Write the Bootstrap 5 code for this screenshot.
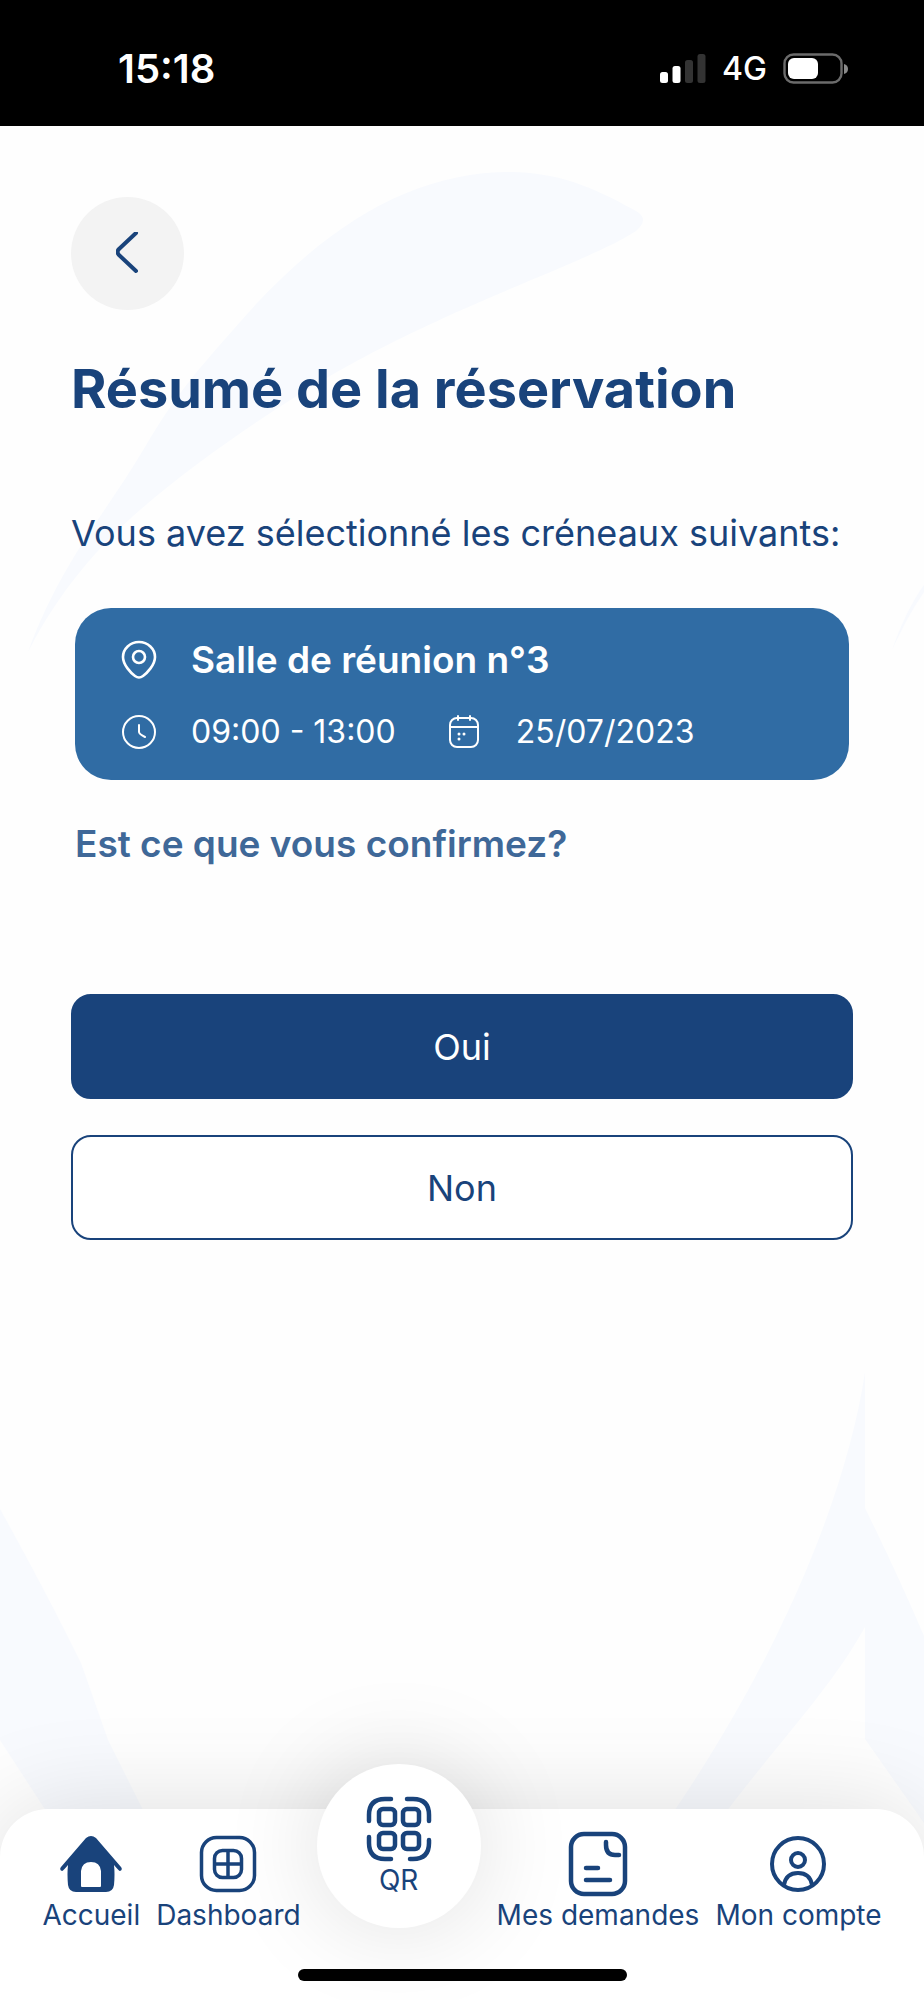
<!DOCTYPE html>
<html lang="fr">
<head>
<meta charset="utf-8">
<meta name="viewport" content="width=device-width, initial-scale=1">
<title>Résumé de la réservation</title>
<link href="https://cdn.jsdelivr.net/npm/bootstrap@5.3.0/dist/css/bootstrap.min.css" rel="stylesheet">
<style>
  :root { --navy: #19437b; --slot: #306ca4; --tint: #f8fafe; }
  body { font-family: Inter, "Liberation Sans", sans-serif; color: var(--navy); background: #fefefe; overflow-x: hidden; }
  svg { display: block; flex: none; }
  .line { fill: none; stroke: currentColor; stroke-linecap: round; stroke-linejoin: round; }
  .status { background: #000; color: #fff; height: 126px; padding: 12px 76px 0 118px; }
  .clock { font-size: 40px; font-weight: 600; line-height: 48px; }
  .network { font-size: 32px; font-weight: 500; line-height: 48px; }
  .backdrop { top: 0; left: 0; width: 100%; height: auto; z-index: -1; fill: var(--tint); }
  .content { padding: 71px 71px 0; }
  .back { width: 113px; height: 113px; background: #f3f3f3; color: var(--navy); }
  .title { font-size: 54px; font-weight: 700; line-height: 64px; margin: 47px 0 0; }
  .intro { font-size: 36px; line-height: 48px; margin: 88px 0 0; }
  .slot { background: var(--slot); color: #fff; border-radius: 36px; margin: 51px 4px 0; padding: 28px 44px 24px; }
  .slot-name { font-size: 37px; font-weight: 600; line-height: 48px; }
  .slot-info { font-size: 32px; line-height: 48px; }
  .glyph { width: 40px; margin-right: 32px; }
  .question { font-size: 37px; font-weight: 600; line-height: 48px; color: #3f6898; margin: 40px 4px 0; }
  .choices { gap: 36px; margin-top: 126px; }
  .choice { height: 105px; border: 2px solid var(--navy); border-radius: 20px; font-size: 36px; color: var(--navy); background: #fff; }
  .choice-main { color: #fff; background: var(--navy); }
  .tabs { background: #fff; border-radius: 48px 48px 0 0; box-shadow: 0 0 100px rgba(0,0,0,.13); margin-top: 160px; padding-bottom: 19px; }
  .tab-row { gap: 16px; height: 160px; }
  .tab { font-size: 28px; line-height: 36px; color: var(--navy); text-decoration: none; white-space: nowrap; padding-top: 22px; }
  .tab-icon { height: 66px; }
  .qr { width: 164px; height: 164px; margin-top: -45px; padding-top: 32px; background: #fff; border-radius: 50%; box-shadow: 0 0 100px rgba(0,0,0,.13); }
  .home-bar { width: 329px; height: 12px; border-radius: 6px; background: #000; }
</style>
</head>
<body class="position-relative min-vh-100 d-flex flex-column">
  <svg class="backdrop position-absolute" viewBox="0 0 924 2000" aria-hidden="true">
    <path d="M28 652C62 560 105 515 145 447C176 394 198 370 233 330C320 228 410 172 510 172C565 172 605 194 636 211Q650 219 636 231C600 255 510 286 418 330C340 366 265 414 200 462C130 514 72 566 28 652Z"/>
    <path d="M892 650Q906 610 924 585V592Q908 615 892 650Z"/>
    <path d="M865 1372C846 1500 775 1665 668 1820H720C780 1740 830 1690 865 1627V1739L924 1823V1636Q898 1575 865 1508Z"/>
    <path d="M0 1509Q45 1590 81 1663L108 1740L148 1820H52L0 1740Z"/>
  </svg>

  <header class="status d-flex align-items-center justify-content-between">
    <span class="clock">15:18</span>
    <div class="d-flex align-items-center">
      <svg width="46" height="30" viewBox="0 0 46 30" fill="#fff" aria-label="Signal">
        <rect y="18" width="8" height="11" rx="2.500"/><rect x="12.500" y="12" width="8" height="17" rx="2.500"/>
        <g fill="#333"><rect x="25" y="6" width="8" height="23" rx="2.500"/><rect x="37.500" width="8" height="29" rx="2.500"/></g>
      </svg>
      <span class="network mx-3">4G</span>
      <svg width="65" height="32" viewBox="0 0 65 32" aria-label="Batterie">
        <rect x="1.500" y="1.500" width="57" height="28" rx="9" fill="none" stroke="#6b6b6b" stroke-width="2.400"/>
        <rect x="5" y="5" width="30" height="21" rx="6" fill="#fff"/><path d="M61 11q4 1 4 5t-4 5z" fill="#8a8a8a"/>
      </svg>
    </div>
  </header>

  <main class="content">
    <button type="button" class="back btn rounded-circle border-0 p-0 d-flex align-items-center justify-content-center" aria-label="Retour">
      <svg class="line" width="24" height="44" viewBox="0 0 24 44" stroke-width="4"><path d="M20 1L3 17Q0 20 3 23L20 39"/></svg>
    </button>
    <h1 class="title">Résumé de la réservation</h1>
    <p class="intro">Vous avez sélectionné les créneaux suivants:</p>

    <section class="slot">
      <div class="slot-name d-flex align-items-center">
        <svg class="glyph line" height="40" viewBox="0 0 40 40" stroke-width="2.600"><path d="M20 2C11 2 4 9 4 17C4 25 12 33 16 36Q20 39 24 36C28 33 36 25 36 17C36 9 29 2 20 2Z"/><circle cx="20" cy="17" r="6"/></svg>
        <span>Salle de réunion n°3</span>
      </div>
      <div class="slot-info d-flex align-items-center mt-4">
        <svg class="glyph line" height="40" viewBox="0 0 40 40" stroke-width="2"><circle cx="20" cy="20" r="16"/><path d="M20 13V20Q20 22 26 25"/></svg>
        <span class="me-5">09:00 - 13:00</span>
        <svg class="glyph line" height="40" viewBox="0 0 40 40" stroke-width="2"><rect x="6" y="6" width="28" height="29" rx="7"/><path d="M6 15H34M14 4V8M26 4V8"/><path stroke-width="3" d="M15 22h0M20 22h0M15 27h0"/></svg>
        <span>25/07/2023</span>
      </div>
    </section>

    <p class="question">Est ce que vous confirmez?</p>

    <div class="choices d-grid">
      <button type="button" class="choice choice-main btn">Oui</button>
      <button type="button" class="choice btn">Non</button>
    </div>
  </main>

  <footer class="tabs mt-auto">
    <nav class="tab-row d-flex justify-content-center" aria-label="Navigation principale">
      <a class="tab d-flex flex-column align-items-center" href="#accueil">
        <span class="tab-icon d-flex align-items-center">
          <svg width="64" height="58" viewBox="0 0 64 58"><path fill="currentColor" fill-rule="evenodd" d="M27 3Q32-1 37 3L62 32Q64 35 61 36Q60 36 55 30Q56 39 55 50Q54 57 47 57H17Q10 57 9 50Q8 39 9 30Q4 36 3 36Q0 35 2 32ZM23 52H41Q42 52 42 51V36Q41 27 32 27Q23 27 22 36V51Q22 52 23 52Z"/></svg>
        </span>Accueil
      </a>
      <a class="tab d-flex flex-column align-items-center" href="#dashboard">
        <span class="tab-icon d-flex align-items-center">
          <svg class="line" width="58" height="58" viewBox="0 0 58 58" stroke-width="3.500"><rect x="2.500" y="2.500" width="53" height="53" rx="15"/><rect x="15.500" y="15.500" width="27" height="27" rx="8"/><path d="M29 16V42M16 29H42"/></svg>
        </span>Dashboard
      </a>
      <a class="tab qr d-flex flex-column align-items-center" href="#qr">
        <svg class="line" width="66" height="66" viewBox="0 0 66 66" stroke-width="4.500"><path d="M25 3H19Q3 3 3 19V25M41 3H47Q63 3 63 19V25M3 41V47Q3 63 19 63H25M63 44V47Q63 63 47 63H44"/><rect x="13" y="13" width="16" height="16" rx="4"/><rect x="37" y="13" width="16" height="16" rx="4"/><rect x="13" y="37" width="16" height="16" rx="4"/><rect x="37" y="37" width="16" height="16" rx="4"/></svg>
        QR
      </a>
      <a class="tab d-flex flex-column align-items-center" href="#demandes">
        <span class="tab-icon d-flex align-items-center">
          <svg class="line" width="60" height="66" viewBox="0 0 60 66" stroke-width="4.500"><rect x="3" y="3" width="54" height="60" rx="13"/><path d="M38 11V14Q38 24 47 24H51M18 37H30M18 49H42"/></svg>
        </span>Mes demandes
      </a>
      <a class="tab d-flex flex-column align-items-center" href="#compte">
        <span class="tab-icon d-flex align-items-center">
          <svg class="line" width="58" height="58" viewBox="0 0 58 58" stroke-width="4"><circle cx="29" cy="29" r="26"/><circle cx="29" cy="25" r="7"/><path d="M15 50Q17 38 29 38Q41 38 43 50"/></svg>
        </span>Mon compte
      </a>
    </nav>
    <div class="home-bar mx-auto position-relative"></div>
  </footer>
<script src="https://cdn.jsdelivr.net/npm/bootstrap@5.3.0/dist/js/bootstrap.bundle.min.js"></script>
</body>
</html>
